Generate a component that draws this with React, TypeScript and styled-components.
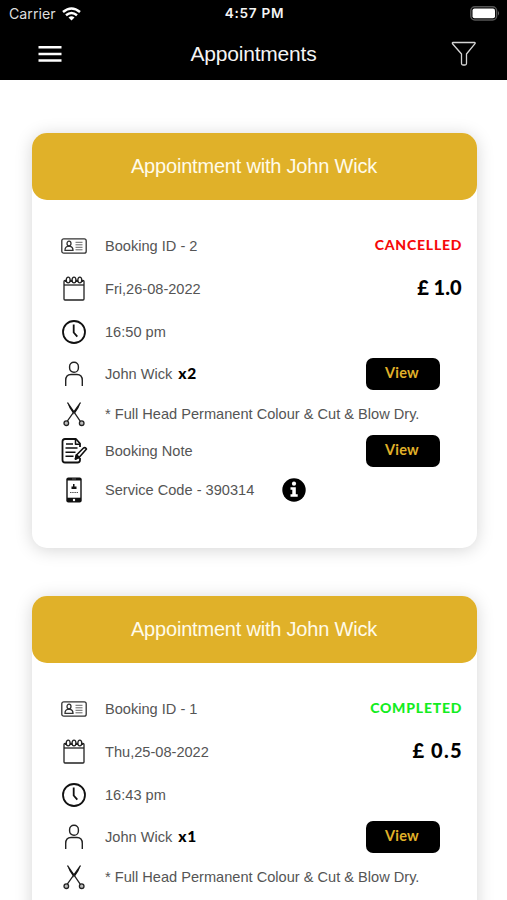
import React from "react";
import styled, { createGlobalStyle } from "styled-components";

const GlobalStyle = createGlobalStyle`
  * { box-sizing: border-box; }
  html, body { margin: 0; background: #fff; }
  body { height: 900px; overflow: hidden; font-family: "Liberation Sans", Arial, sans-serif; }
  svg { display: block; flex: none; }
`;

const Screen = styled.div`
  width: 507px;
  height: 900px;
  overflow: hidden;
  background: #fff;
`;

const Header = styled.header`
  height: 80px;
  background: #000;
  color: #f4f4f4;
`;

const StatusBar = styled.div`
  height: 27px;
  display: grid;
  grid-template-columns: 1fr auto 1fr;
  align-items: center;
  padding: 0 7px 0 9px;
`;

const Carrier = styled.div`
  display: flex;
  align-items: center;
  gap: 6px;
  font: 14.2px/27px Inter, sans-serif;
  color: #ddd;
`;

const Clock = styled.div`
  font: 600 13.6px/27px Inter, sans-serif;
  letter-spacing: 0.7px;
`;

const Battery = styled.div`
  justify-self: end;
`;

const NavBar = styled.div`
  height: 53px;
  display: grid;
  grid-template-columns: 1fr auto 1fr;
  align-items: center;
  padding: 0 30px 0 38px;
`;

const Title = styled.h1`
  margin: 0 8px 0 0;
  font-size: 21px;
  line-height: 51px;
  letter-spacing: -0.2px;
  font-weight: 400;
`;

const NavEnd = styled.div`
  justify-self: end;
`;

const List = styled.main`
  display: flex;
  flex-direction: column;
  gap: 48px;
  padding: 53px 30.500px 0 31.500px;
`;

const Card = styled.article`
  height: 415px;
  border-radius: 15px;
  background: #fff;
  box-shadow: 0 2px 17px rgba(0, 0, 0, 0.17);
`;

const CardHeader = styled.h2`
  margin: 0 0 25px;
  height: 67px;
  border-radius: 15px;
  background: #e0b129;
  color: #fffbe9;
  font-size: 20px;
  letter-spacing: -0.2px;
  line-height: 67px;
  font-weight: 400;
  text-align: center;
`;

const Row = styled.div<{ $h: number; $inset?: number }>`
  height: ${(p) => p.$h}px;
  display: flex;
  align-items: center;
  padding: 0 ${(p) => p.$inset ?? 15}px 0 28.500px;
`;

const IconCell = styled.span`
  width: 28px;
  flex: none;
  display: flex;
  justify-content: center;
  margin-right: 17px;
`;

const Label = styled.span`
  flex: none;
  font-size: 14.6px;
  color: #555;
  white-space: pre;
`;

const Count = styled.b`
  margin: -3px 0 0 6px;
  font: 900 15.5px/20px Lato, sans-serif;
  letter-spacing: 0.6px;
  color: #000;
`;

const Trailing = styled.span`
  margin-left: auto;
`;

const Status = styled.strong<{ $color: string }>`
  display: block;
  margin: -2px -0.8px 0 0;
  font: 900 14px/20px Lato, sans-serif;
  letter-spacing: 0.8px;
  color: ${(p) => p.$color};
`;

const Price = styled.strong<{ $spacing: number }>`
  display: block;
  margin-top: -4px;
  margin-right: ${(p) => -p.$spacing}px;
  font: 900 20px/24px Lato, sans-serif;
  letter-spacing: ${(p) => p.$spacing}px;
  color: #000;
  white-space: pre;
`;

const ViewButton = styled.button`
  display: block;
  width: 74px;
  height: 32px;
  padding: 0 2px 2px 0;
  border: 0;
  border-radius: 7px;
  background: #000;
  color: #e0b129;
  font: 700 14.5px/28px Lato, sans-serif;
  letter-spacing: 0.2px;
`;

const InfoMark = styled.span`
  margin-left: 28px;
`;

const WifiIcon = () => (
  <svg width="19" height="14" viewBox="0 0 19 14" fill="none" stroke="#fff" strokeWidth="2.500">
    <path d="M1 5Q9.500-2 18 5M4 8.300Q9.500 3.700 15 8.300" />
    <path d="M6.500 10.500Q9.500 8 12.500 10.500L9.500 13.500Z" fill="#fff" stroke="none" />
  </svg>
);

const BatteryIcon = () => (
  <svg width="30" height="15" viewBox="0 0 30 15">
    <rect x="0.800" y="0.800" width="25.800" height="13.200" rx="4" fill="none" stroke="#555" strokeWidth="1.500" />
    <rect x="2.500" y="2.500" width="22.500" height="9.800" rx="2" fill="#fff" />
    <path d="M28 5q2 2.200 0 4.600z" fill="#666" />
  </svg>
);

const MenuIcon = () => (
  <svg width="24" height="18" viewBox="0 0 24 18" fill="#fff">
    <path d="M.5 1h23v2.600H.5zM.5 7.700h23v2.600H.5zM.5 14.200h23v2.600H.5z" />
  </svg>
);

const FilterIcon = () => (
  <svg width="26" height="26" viewBox="0 0 26 26" fill="none" stroke="#d5d5d5" strokeWidth="1.300" strokeLinejoin="round">
    <path d="M2 1.500h21.500q1 0 .5 1.200L15.500 13v9.500q0 1.500-1.500 1.500h-2q-1.500 0-1.500-1.500V13L1.500 2.700Q1 1.500 2 1.500Z" />
  </svg>
);

const IdIcon = () => (
  <svg width="26" height="16" viewBox="0 0 26 16" fill="none" stroke="#333" strokeWidth="1.300">
    <rect x=".8" y=".8" width="24.400" height="14.400" rx="2" />
    <ellipse cx="8" cy="5.600" rx="2" ry="2.400" />
    <path d="M4 12.300q0-3.500 2.800-3.900h2.400Q12 8.800 12 12.300Z" />
    <path d="M14.500 4.300h7M14.500 6.800h7M14.500 9.300h7M14.500 11.800h7" stroke="#666" strokeWidth="1" />
  </svg>
);

const CalendarIcon = () => (
  <svg width="22" height="25" viewBox="0 0 22 25" fill="none" stroke="#222" strokeWidth="1.300">
    <rect x="1" y="4.500" width="20" height="19.500" rx="1" />
    <path d="M1 9h20" />
    <ellipse cx="5.200" cy="4" rx="1.900" ry="2.900" fill="#fff" />
    <ellipse cx="11" cy="4" rx="1.900" ry="2.900" fill="#fff" />
    <ellipse cx="16.800" cy="4" rx="1.900" ry="2.900" fill="#fff" />
    <path d="M2 5h1.800M7 5h2M13 5h2M18.300 5h1.800" strokeWidth="1.800" />
  </svg>
);

const ClockIcon = () => (
  <svg width="26" height="26" viewBox="0 0 26 26" fill="none" stroke="#111" strokeWidth="1.800">
    <circle cx="13" cy="13" r="11" />
    <path d="M12.700 5.500v8l3.600 4.200" />
  </svg>
);

const PersonIcon = () => (
  <svg width="20" height="26" viewBox="0 0 20 26" fill="none" stroke="#222" strokeWidth="1.400">
    <rect x="5.600" y="1.200" width="8.800" height="10" rx="4.300" />
    <path d="M1.700 25v-5.500Q1.700 13.500 7 13.500h6q5.300 0 5.300 6V25" />
  </svg>
);

const ScissorsIcon = () => (
  <svg width="22" height="26" viewBox="0 0 22 26" fill="none" stroke="#222" strokeWidth="1.300">
    <path d="M4.500 1.500 17.200 20.200M17.500 1.500 4.300 20.200" />
    <path d="M4.200 1.500 6.500 7l4.300 6.500 1.300-1.500ZM17.800 1.500 15.500 7l-4 6-1.600-1Z" fill="#111" stroke="none" />
    <circle cx="3.300" cy="22.200" r="2.300" fill="#bbb" />
    <circle cx="18.700" cy="22.200" r="2.300" fill="#bbb" />
  </svg>
);

const NoteIcon = () => (
  <svg width="27" height="26" viewBox="0 0 27 26" fill="none" stroke="#111" strokeWidth="1.800" strokeLinejoin="round">
    <path d="M19 9V5.500L15 1H4Q1.500 1 1.500 3.500V22q0 2.500 2.500 2.500h12.500q2.500 0 2.500-2.500v-2" />
    <path d="M14.500 1.500v4.800H19M5 6h7M4.500 10h12M4.500 14.200h10M4.500 18.300h8" strokeWidth="1.500" />
    <path d="m14.500 21 1-4 7-7q2-1 3 1l-7 8Z" fill="#fff" strokeWidth="1.600" />
    <path d="m14.500 21 1-4 2.500 2.500Z" fill="#111" />
  </svg>
);

const PhoneIcon = () => (
  <svg width="16" height="26" viewBox="0 0 16 26">
    <rect x=".3" y=".5" width="15.400" height="25" rx="2" fill="#111" />
    <path d="M1.700 3.500h12.600v17.200H1.700z" fill="#fff" />
    <path d="M5.500 9.500h5v2.500h-5zM7 7h1.500v2.500H7z" fill="#111" />
    <path d="M4 15.500h8" stroke="#555" strokeDasharray="1.500 .7" />
    <path d="M6 2h4" stroke="#777" strokeWidth=".7" />
    <circle cx="8" cy="23" r="1.200" fill="#fff" />
  </svg>
);

const InfoIcon = () => (
  <svg width="24" height="24" viewBox="0 0 24 24">
    <circle cx="12" cy="12" r="11.700" fill="#000" />
    <circle cx="12" cy="5.700" r="2.100" fill="#fff" />
    <path d="M8.500 9.300h5.300v7h1.900v2.500H8.500v-2.500h1.800v-4.500H8.500z" fill="#fff" />
  </svg>
);

type Appointment = {
  id: number;
  status: string;
  color: string;
  date: string;
  price: string;
  priceSpacing: number;
  time: string;
  people: number;
  hasNote: boolean;
};

const appointments: Appointment[] = [
  { id: 2, status: "CANCELLED", color: "#f60a0a", date: "Fri,26-08-2022", price: "£ 1.0", priceSpacing: 0, time: "16:50 pm", people: 2, hasNote: true },
  { id: 1, status: "COMPLETED", color: "#12ed21", date: "Thu,25-08-2022", price: "£ 0.5", priceSpacing: 1.2, time: "16:43 pm", people: 1, hasNote: false },
];

const AppointmentCard = ({ item }: { item: Appointment }) => (
  <Card>
    <CardHeader>Appointment with John Wick</CardHeader>
    <Row $h={42}>
      <IconCell><IdIcon /></IconCell>
      <Label>Booking ID - {item.id}</Label>
      <Trailing><Status $color={item.color}>{item.status}</Status></Trailing>
    </Row>
    <Row $h={43}>
      <IconCell><CalendarIcon /></IconCell>
      <Label>{item.date}</Label>
      <Trailing><Price $spacing={item.priceSpacing}>{item.price}</Price></Trailing>
    </Row>
    <Row $h={43}>
      <IconCell><ClockIcon /></IconCell>
      <Label>{item.time}</Label>
    </Row>
    <Row $h={42} $inset={36.5}>
      <IconCell><PersonIcon /></IconCell>
      <Label>John Wick</Label>
      <Count>x{item.people}</Count>
      <Trailing><ViewButton>View</ViewButton></Trailing>
    </Row>
    <Row $h={37}>
      <IconCell><ScissorsIcon /></IconCell>
      <Label>* Full Head Permanent Colour &amp; Cut &amp; Blow Dry.</Label>
    </Row>
    {item.hasNote && (
      <Row $h={37} $inset={36.5}>
        <IconCell><NoteIcon /></IconCell>
        <Label>Booking Note</Label>
        <Trailing><ViewButton>View</ViewButton></Trailing>
      </Row>
    )}
    {item.hasNote && (
      <Row $h={42}>
        <IconCell><PhoneIcon /></IconCell>
        <Label>Service Code - 390314</Label>
        <InfoMark><InfoIcon /></InfoMark>
      </Row>
    )}
  </Card>
);

export default function App() {
  return (
    <Screen>
      <GlobalStyle />
      <Header>
        <StatusBar>
          <Carrier>Carrier<WifiIcon /></Carrier>
          <Clock>4:57 PM</Clock>
          <Battery><BatteryIcon /></Battery>
        </StatusBar>
        <NavBar>
          <MenuIcon />
          <Title>Appointments</Title>
          <NavEnd><FilterIcon /></NavEnd>
        </NavBar>
      </Header>
      <List>
        {appointments.map((item) => <AppointmentCard key={item.id} item={item} />)}
      </List>
    </Screen>
  );
}
